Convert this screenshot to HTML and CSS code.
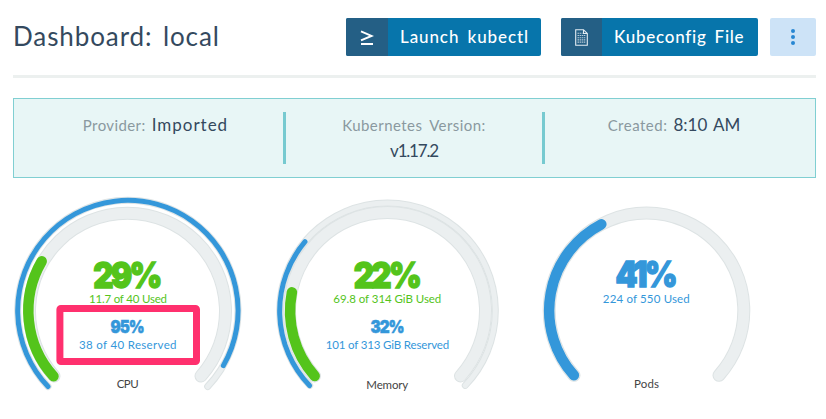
FILE: index.html
```html
<!DOCTYPE html>
<html lang="en">
<head>
<meta charset="utf-8">
<title>Dashboard: local</title>
<link rel="stylesheet" href="styles.css">
</head>
<body>
<header class="header">
  <h1 class="title">Dashboard: local</h1>
  <div class="actions">
    <button class="btn">
      <span class="btn-icon"><svg width="14" height="16" viewBox="0 0 14 16"><path d="M1 2.4 11.5 6.9 1 11.4M1 15H13" fill="none" stroke="#fff" stroke-width="2"/></svg></span>
      <span class="btn-label launch">Launch kubectl</span>
    </button>
    <button class="btn btn-config">
      <span class="btn-icon"><svg width="13" height="17" viewBox="0 0 13 17"><path d="M.7.7H8.5L12.3 4.5V16.3H.7ZM8.5.7V4.5H12.3" fill="none" stroke="#e4edf3" stroke-width="1.1"/><path d="M2.5 4.3H7.5M2.5 6.5H10.7M2.5 8.7H10.7M2.5 10.9H10.7M2.5 13.1H10.7" stroke="#b5cad8" stroke-width="1.1" stroke-dasharray="1.5 .6"/></svg></span>
      <span class="btn-label config">Kubeconfig File</span>
    </button>
    <button class="menu" aria-label="More"><svg width="4" height="16" viewBox="0 0 4 16" fill="#2787d2"><circle cx="2" cy="2" r="2"/><circle cx="2" cy="8" r="2"/><circle cx="2" cy="14" r="2"/></svg></button>
  </div>
</header>
<section class="banner">
  <div class="fact first"><span class="key provider">Provider:</span><span class="value imported">Imported</span></div>
  <div class="fact version"><span class="key kube">Kubernetes Version:</span><span class="value number">v1.17.2</span></div>
  <div class="fact"><span class="key created">Created:</span><span class="value time">8:10 AM</span></div>
</section>
<main class="gauges">
  <svg class="gauge" viewBox="0 185 260 220">
    <path class="edge outer" d="M48 386.5A110.2 110.2 0 1 1 207.7 386.5"/>
    <path class="track outer" d="M48 386.5A110.2 110.2 0 1 1 207.7 386.5"/>
    <path class="edge inner" d="M54 376A98 98 0 1 1 201 376"/>
    <path class="track inner" d="M54 376A98 98 0 1 1 201 376"/>
    <path class="bar thin blue" d="M48 386.5A110.2 110.2 0 1 1 223.3 365.7"/>
    <path class="bar thick green" d="M53.5 376.3A98 98 0 0 1 41.7 261.3"/>
    <text class="big green" x="93.2" y="287.5" textLength="66.5" lengthAdjust="spacingAndGlyphs">29%</text>
    <text class="small green" x="89" y="303.3" textLength="78">11.7 of 40 Used</text>
    <text class="mid blue" x="110.6" y="332.8" textLength="32.8" lengthAdjust="spacingAndGlyphs">95%</text>
    <text class="small blue" x="79" y="349.3" textLength="97.5">38 of 40 Reserved</text>
    <text class="small name" x="116.7" y="388.3" textLength="22">CPU</text>
    <rect class="highlight" x="59.9" y="308.4" width="136.6" height="53.2" rx="1"/>
  </svg>
  <svg class="gauge" viewBox="0 185 260 220">
    <path class="edge outer" d="M49.7 385.4A107.8 107.8 0 1 1 205.3 385.4"/>
    <path class="track outer" d="M49.7 385.4A107.8 107.8 0 1 1 205.3 385.4"/>
    <path class="edge inner" d="M54.5 376A98 98 0 1 1 200.5 376"/>
    <path class="track inner" d="M54.5 376A98 98 0 1 1 200.5 376"/>
    <path class="bar thin blue" d="M49.5 385.6A107.8 107.8 0 0 1 45 241.7"/>
    <path class="bar thick green" d="M54.7 376A98 98 0 0 1 31.9 292.3"/>
    <text class="big green" x="93.7" y="287.5" textLength="65.5" lengthAdjust="spacingAndGlyphs">22%</text>
    <text class="small green" x="73.3" y="303.3" textLength="108">69.8 of 314 GiB Used</text>
    <text class="mid blue" x="110.5" y="332.8" textLength="32.8" lengthAdjust="spacingAndGlyphs">32%</text>
    <text class="small blue" x="65.7" y="349.3" textLength="123.5">101 of 313 GiB Reserved</text>
    <text class="small name" x="106.3" y="389" textLength="42">Memory</text>
  </svg>
  <svg class="gauge" viewBox="0 185 260 220">
    <path class="edge inner" d="M54 375.3A97.3 97.3 0 1 1 199 375.3"/>
    <path class="track inner" d="M54 375.3A97.3 97.3 0 1 1 199 375.3"/>
    <path class="bar thick blue" d="M53.9 375.3A97.3 97.3 0 0 1 81.3 224.3"/>
    <text class="big blue" x="95.4" y="286.5" textLength="59.5" lengthAdjust="spacingAndGlyphs">41%</text>
    <text class="small blue" x="82.8" y="303.3" textLength="87">224 of 550 Used</text>
    <text class="small name" x="114" y="388.3" textLength="25">Pods</text>
  </svg>
</main>
</body>
</html>
```
FILE: styles.css
```css
* { box-sizing: border-box; }
body { margin: 0; background: #fff; color: #34495e; font-family: Lato, "Liberation Sans", sans-serif; overflow: hidden; }
.header { display: flex; justify-content: space-between; align-items: flex-start; height: 78px; margin: 0 10px 0 13px; padding-top: 18px; border-bottom: 3px solid #ecf0ef; }
.title { margin: 0; font-size: 26px; font-weight: 400; line-height: 36px; letter-spacing: .9px; word-spacing: 3px; white-space: nowrap; }
.actions { display: flex; }
.btn { display: flex; width: 195px; height: 38px; margin: 0 20px 0 0; padding: 0; border: 0; border-radius: 2px; overflow: hidden; background: #0775ab; color: #fff; font: 500 17px/38px Lato, sans-serif; }
.btn-config { width: 197px; margin-right: 12px; }
.btn-icon { display: flex; width: 42px; height: 38px; align-items: center; justify-content: center; background: #245f85; }
.btn-config .btn-icon { width: 41px; }
.btn-label { flex: 1; padding-left: 12px; text-align: left; white-space: nowrap; }
.launch { letter-spacing: .9px; word-spacing: 3px; }
.config { letter-spacing: .75px; word-spacing: 3px; }
.menu { display: flex; width: 46px; height: 38px; padding: 0; align-items: center; justify-content: center; border: 0; border-radius: 2px; background: #cde3f7; }
.banner { display: grid; grid-template-columns: 272px 259px 1fr; height: 80px; margin: 20px 10px 0 13px; padding: 13px 0; border: 1px solid #80cfd2; background: #e8f6f6; }
.fact { display: flex; justify-content: center; align-items: flex-start; border-right: 3px solid #77cad0; line-height: 26px; white-space: nowrap; }
.fact:last-child { padding-right: 12px; border: 0; }
.first { padding-left: 14px; }
.version { flex-direction: column; align-items: center; }
.key { font-size: 15px; color: #8a999f; margin-right: 6px; }
.value { font-size: 17px; }
.version .key, .version .value { margin: 0; }
.provider { letter-spacing: .4px; }
.imported { letter-spacing: 1px; }
.kube { letter-spacing: .45px; word-spacing: 3px; }
.number { letter-spacing: -1.2px; }
.created { letter-spacing: .5px; }
.time { word-spacing: 2px; }
.gauges { display: flex; width: 780px; margin-top: 7px; }
.gauge { display: block; width: 260px; height: 220px; flex: none; }
.edge, .track, .bar { fill: none; stroke-linecap: round; }
.edge { stroke: #dde3e4; }
.track { stroke: #ebeff0; }
.edge.inner { stroke-width: 13px; }
.track.inner { stroke-width: 11px; }
.edge.outer { stroke-width: 7px; }
.track.outer { stroke-width: 5px; }
.thick { stroke-width: 10.5px; }
.thin { stroke-width: 5px; }
.bar.green { stroke: #54c41b; }
.bar.blue { stroke: #3497da; }
text.green { fill: #54c41b; stroke: #54c41b; }
text.blue { fill: #3497da; stroke: #3497da; }
.big { font-family: Inter, sans-serif; font-size: 35.5px; font-weight: 900; letter-spacing: -3px; stroke-width: 1.4px; }
.mid { font-family: Inter, sans-serif; font-size: 18px; font-weight: 900; letter-spacing: -1.3px; stroke-width: .5px; }
text.small { font-size: 11.5px; stroke: none; }
.name { fill: #444; }
.highlight { fill: none; stroke: #ff306e; stroke-width: 7px; stroke-linejoin: round; }
```
